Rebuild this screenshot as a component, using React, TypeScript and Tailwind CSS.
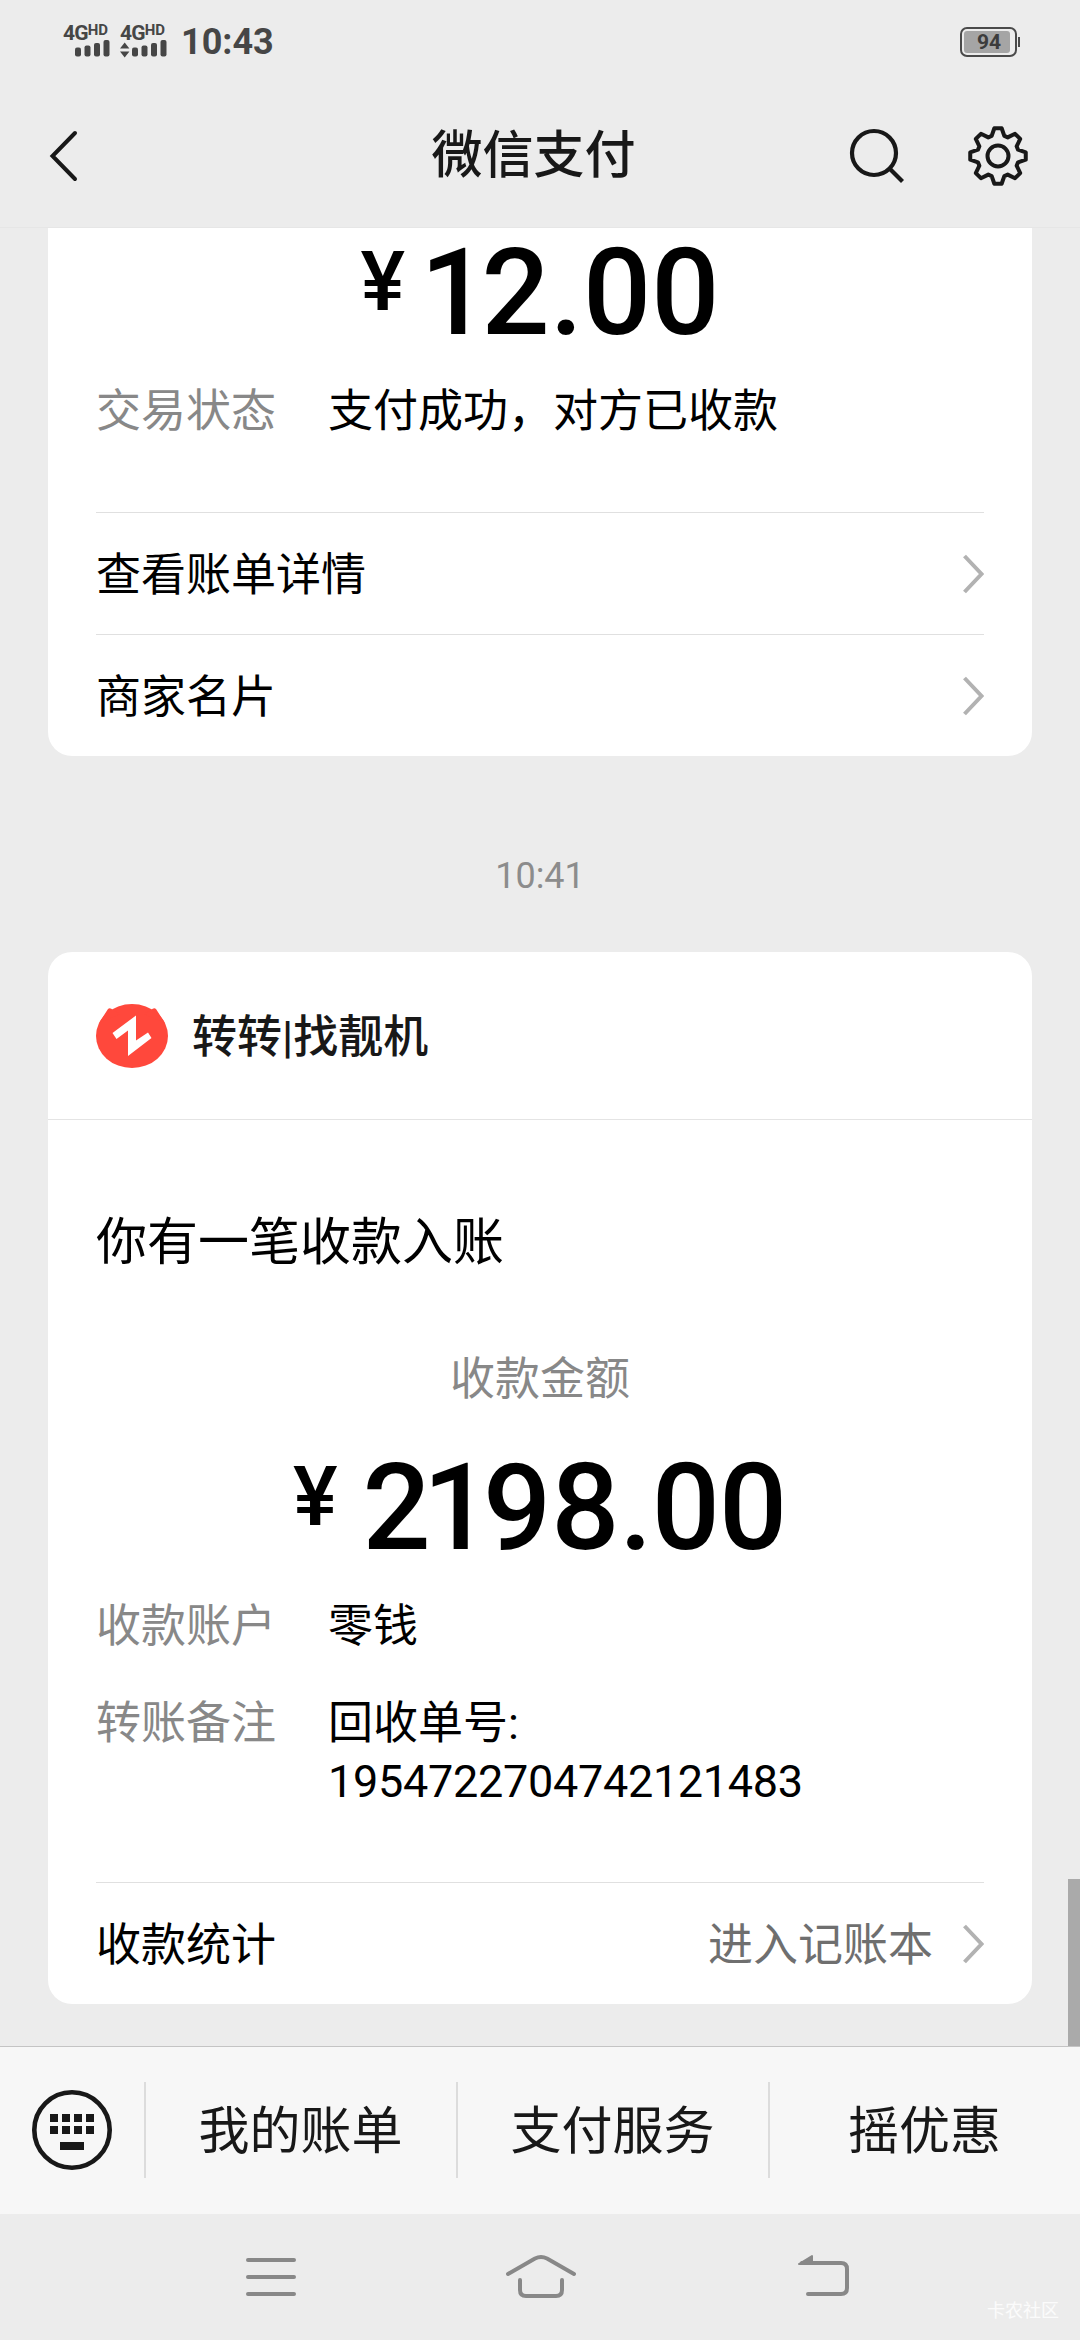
import type { ReactNode } from "react";
import { clsx } from "clsx";

const MENU_ITEMS = ["我的账单", "支付服务", "摇优惠"];

const SIGNAL_BARS = [
  { x: 12, h: 9 },
  { x: 21.5, h: 11 },
  { x: 31, h: 13.5 },
  { x: 40.5, h: 16.5 },
];

/** Eight rounded teeth, generated around the origin */
const GEAR_PATH = (() => {
  const points: string[] = [];
  const add = (deg: number, r: number) => {
    const a = (deg * Math.PI) / 180;
    points.push(`${(r * Math.sin(a)).toFixed(2)} ${(-r * Math.cos(a)).toFixed(2)}`);
  };
  for (let i = 0; i < 8; i++) {
    const c = i * 45;
    add(c - 17.5, 21);
    add(c - 7.5, 28);
    add(c + 7.5, 28);
    add(c + 17.5, 21);
  }
  return `M${points.join("L")}Z`;
})();

function Signal({ arrows }: { arrows?: boolean }) {
  return (
    <div className="flex w-[47px] flex-col">
      <div className="flex items-start font-bold leading-none text-[#464646]">
        <span className="h-[15px] text-[21px] leading-[16px] tracking-[-0.8px]">4G</span>
        <span className="text-[15px] leading-[11px]">HD</span>
      </div>
      <svg width="47" height="18" viewBox="0 0 47 18" fill="#464646" aria-hidden>
        {arrows && <path d="M0 8.5 4.7 2.5 9.4 8.5ZM0 11.5H9.4L4.7 17.5Z" />}
        {SIGNAL_BARS.map((bar) => (
          <rect key={bar.x} x={bar.x} y={16.5 - bar.h} width="6" height={bar.h} rx="2" />
        ))}
      </svg>
    </div>
  );
}

function StatusBar() {
  return (
    <div className="flex h-[84px] items-start justify-between pl-[63px] pr-[60px]">
      <div className="flex pt-[25px]">
        <Signal />
        <div className="ml-[10px]">
          <Signal arrows />
        </div>
        <span className="ml-[14px] text-[36px] font-bold leading-[34px] text-[#464646]">10:43</span>
      </div>
      <div className="flex items-center pt-[27px]">
        <div className="flex h-[30px] w-[57px] rounded-[7px] border-2 border-[#4a4a4a] p-[2px]">
          <div className="flex w-[46px] items-center justify-center rounded-[3px] bg-[#a5a5a5] pl-1 text-[21px] font-bold leading-none text-[#3c3c3c]">
            94
          </div>
        </div>
        <div className="ml-px h-[10px] w-[2px] bg-[#4a4a4a]" />
      </div>
    </div>
  );
}

function Header() {
  return (
    <header className="grid h-[144px] grid-cols-[1fr_auto_1fr] items-center border-b border-[#e6e6e6] text-[#181818]">
      <svg className="ml-[48px]" width="32" height="56" viewBox="0 0 32 56" fill="none" stroke="currentColor" strokeWidth="4" strokeLinecap="round" aria-hidden>
        <path d="M27 5 4.5 28 27 51" />
      </svg>
      <h1 className="mr-[13px] text-[51px] font-medium leading-[60px]">微信支付</h1>
      <div className="flex items-center justify-end pr-[50px]">
        <svg className="mr-[60px]" width="60" height="64" viewBox="845 124 60 64" fill="none" stroke="currentColor" strokeWidth="4.2" aria-hidden>
          <circle cx="873" cy="153" r="22" />
          <path d="M889 169 901.5 181.5" />
        </svg>
        <svg width="64" height="64" viewBox="-32 -32 64 64" fill="none" stroke="currentColor" strokeWidth="4" strokeLinejoin="round" aria-hidden>
          <path d={GEAR_PATH} />
          <circle r="10.5" />
        </svg>
      </div>
    </header>
  );
}

function Amount({ children }: { children: ReactNode }) {
  return (
    <div className="flex h-[86px] items-start justify-center font-medium text-black">
      <span className="mr-[25px] mt-[2px] text-[84px] leading-[62px]">¥</span>
      <span className="text-[120px] leading-[88px]">{children}</span>
    </div>
  );
}

function Field({ label, className, children }: { label: string; className?: string; children: ReactNode }) {
  return (
    <div className={clsx("flex text-[45px] leading-[58px]", className)}>
      <span className="w-[232px] text-[#888888]">{label}</span>
      <span className="flex-1 text-black">{children}</span>
    </div>
  );
}

function LinkRow({ label, hint }: { label: string; hint?: string }) {
  return (
    <div className="flex h-[122px] items-center border-t border-[#e0e0e0] text-[45px] leading-[60px]">
      <span className="flex-1 pt-[4px] text-black">{label}</span>
      {hint && <span className="mr-[27px] pt-[4px] text-[#6f6f6f]">{hint}</span>}
      <svg width="24" height="44" viewBox="0 0 24 44" fill="none" stroke="#b2b2b2" strokeWidth="4" aria-hidden>
        <path d="M4.5 4 21.5 22 4.5 40" />
      </svg>
    </div>
  );
}

function ShopLogo() {
  return (
    <svg width="72" height="64" viewBox="0 0 72 64" aria-hidden>
      <g fill="#ff483c">
        <ellipse cx="36" cy="32" rx="36" ry="32" />
        <path d="M3 19 12 5Q14 3 17 6L24 10ZM69 19 60 5Q58 3 55 6L48 10Z" />
      </g>
      <path d="M16.5 29 40 11.5V36.5L52 28.5 55.5 34 32 52V26.5L20.5 35Z" fill="#fff" />
    </svg>
  );
}

function Conversation() {
  return (
    <main className="relative flex h-[1818px] flex-col px-12">
      <section className="h-[528px] rounded-b-3xl bg-white px-12 pt-[21px]">
        <Amount>
          <span className="-ml-[10px] tracking-[-7px]">1</span>2.00
        </Amount>
        <Field label="交易状态" className="mt-12">支付成功，对方已收款</Field>
        <div className="mt-[71px]">
          <LinkRow label="查看账单详情" />
          <LinkRow label="商家名片" />
        </div>
      </section>

      <time className="flex h-[196px] items-center justify-center pt-11 text-[36px] leading-none text-[#8c8c8c]">10:41</time>

      <section className="h-[1052px] rounded-3xl bg-white">
        <div className="flex h-[168px] items-center border-b border-[#e4e4e4] px-12 pt-px">
          <ShopLogo />
          <span className="ml-6 pt-[3px] text-[45px] font-medium leading-[60px] text-[#181818]">转转|找靓机</span>
        </div>
        <div className="px-12 pt-[91px]">
          <p className="text-[51px] leading-[64px] text-black">你有一笔收款入账</p>
          <p className="mt-[75px] text-center text-[45px] leading-[60px] text-[#888888]">收款金额</p>
          <div className="mt-[54px]">
            <Amount>
              <span className="tracking-[-8px]">21</span>98<span className="tracking-[-1px]">.0</span>0
            </Amount>
          </div>
          <Field label="收款账户" className="mt-12">零钱</Field>
          <Field label="转账备注" className="mt-[39px]">
            回收单号:
            <br />
            <span className="tracking-[-0.3px]">1954722704742121483</span>
          </Field>
          <div className="mt-[71px]">
            <LinkRow label="收款统计" hint="进入记账本" />
          </div>
        </div>
      </section>
      <div className="absolute bottom-0 right-0 h-[167px] w-3 bg-[#aaaaaa]" />
    </main>
  );
}

function MenuBar() {
  return (
    <div className="flex h-[168px] items-center border-t border-[#c4c4c4] bg-[#f7f7f7] pb-[2px] text-[#181818]">
      <div className="flex w-36 justify-center">
        <svg width="80" height="80" viewBox="0 0 80 80" fill="currentColor" aria-hidden>
          <circle cx="40" cy="40" r="37.7" fill="none" stroke="currentColor" strokeWidth="4.6" />
          {[18, 30, 42, 54].map((x) => (
            <path key={x} d={`M${x} 24h8v8h-8zM${x} 36h8v8h-8z`} />
          ))}
          <rect x="28" y="52" width="24" height="8" />
        </svg>
      </div>
      {MENU_ITEMS.map((item) => (
        <div key={item} className="flex h-24 flex-1 items-center justify-center border-l-2 border-[#dcdcdc] pt-[5px] pr-px text-[51px] leading-[60px]">
          {item}
        </div>
      ))}
    </div>
  );
}

function SystemNav() {
  return (
    <nav className="relative h-[126px]">
      <svg width="1080" height="126" viewBox="0 2214 1080 126" fill="none" stroke="#888888" strokeWidth="4" strokeLinecap="round" strokeLinejoin="round" aria-hidden>
        <path d="M248 2260H294M248 2277H294M248 2294H294" />
        <path d="M508 2274 535 2258.500Q541 2255.500 547 2258.500L574 2274" />
        <path d="M520 2280V2290Q520 2296 526 2296H556Q562 2296 562 2290V2280" />
        <path d="M802 2263H841Q847 2263 847 2269V2288Q847 2294 841 2294H808" />
        <path d="M799 2264 812 2256V2264Z" fill="#888888" strokeWidth="2" />
      </svg>
      <span className="absolute bottom-[18px] right-[21px] text-[18px] leading-[22px] text-white/80">卡农社区</span>
    </nav>
  );
}

export default function App() {
  return (
    <div className="flex h-[2340px] w-[1080px] flex-col overflow-hidden bg-[#ececec] font-[Roboto,'Noto_Sans_CJK_SC',sans-serif]">
      <StatusBar />
      <Header />
      <Conversation />
      <MenuBar />
      <SystemNav />
    </div>
  );
}
